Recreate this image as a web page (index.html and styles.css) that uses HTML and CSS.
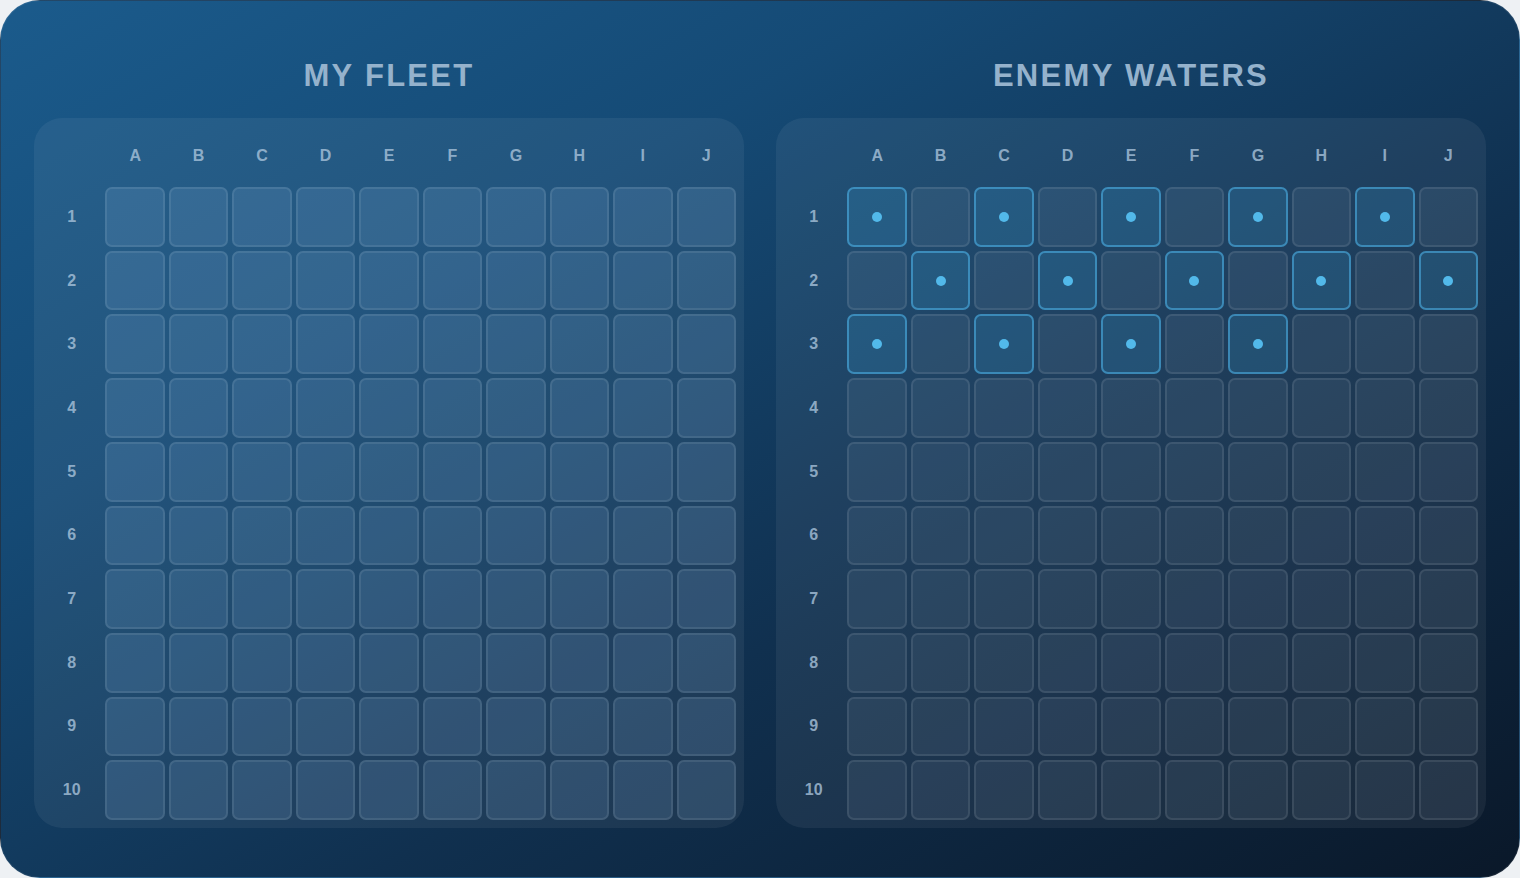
FILE: index.html
```html
<!DOCTYPE html>
<html lang="en">
<head>
<meta charset="utf-8">
<title>Battleship</title>
<link rel="stylesheet" href="styles.css">
</head>
<body>
<main class="board">
  <section class="side">
    <h2 class="side-title">MY FLEET</h2>
    <div class="grid fleet">
      <span class="corner"></span>
      <span class="col">A</span><span class="col">B</span><span class="col">C</span><span class="col">D</span><span class="col">E</span><span class="col">F</span><span class="col">G</span><span class="col">H</span><span class="col">I</span><span class="col">J</span>
      <span class="row">1</span><i class="cell"></i><i class="cell"></i><i class="cell"></i><i class="cell"></i><i class="cell"></i><i class="cell"></i><i class="cell"></i><i class="cell"></i><i class="cell"></i><i class="cell"></i>
      <span class="row">2</span><i class="cell"></i><i class="cell"></i><i class="cell"></i><i class="cell"></i><i class="cell"></i><i class="cell"></i><i class="cell"></i><i class="cell"></i><i class="cell"></i><i class="cell"></i>
      <span class="row">3</span><i class="cell"></i><i class="cell"></i><i class="cell"></i><i class="cell"></i><i class="cell"></i><i class="cell"></i><i class="cell"></i><i class="cell"></i><i class="cell"></i><i class="cell"></i>
      <span class="row">4</span><i class="cell"></i><i class="cell"></i><i class="cell"></i><i class="cell"></i><i class="cell"></i><i class="cell"></i><i class="cell"></i><i class="cell"></i><i class="cell"></i><i class="cell"></i>
      <span class="row">5</span><i class="cell"></i><i class="cell"></i><i class="cell"></i><i class="cell"></i><i class="cell"></i><i class="cell"></i><i class="cell"></i><i class="cell"></i><i class="cell"></i><i class="cell"></i>
      <span class="row">6</span><i class="cell"></i><i class="cell"></i><i class="cell"></i><i class="cell"></i><i class="cell"></i><i class="cell"></i><i class="cell"></i><i class="cell"></i><i class="cell"></i><i class="cell"></i>
      <span class="row">7</span><i class="cell"></i><i class="cell"></i><i class="cell"></i><i class="cell"></i><i class="cell"></i><i class="cell"></i><i class="cell"></i><i class="cell"></i><i class="cell"></i><i class="cell"></i>
      <span class="row">8</span><i class="cell"></i><i class="cell"></i><i class="cell"></i><i class="cell"></i><i class="cell"></i><i class="cell"></i><i class="cell"></i><i class="cell"></i><i class="cell"></i><i class="cell"></i>
      <span class="row">9</span><i class="cell"></i><i class="cell"></i><i class="cell"></i><i class="cell"></i><i class="cell"></i><i class="cell"></i><i class="cell"></i><i class="cell"></i><i class="cell"></i><i class="cell"></i>
      <span class="row">10</span><i class="cell"></i><i class="cell"></i><i class="cell"></i><i class="cell"></i><i class="cell"></i><i class="cell"></i><i class="cell"></i><i class="cell"></i><i class="cell"></i><i class="cell"></i>
    </div>
  </section>
  <section class="side">
    <h2 class="side-title">ENEMY WATERS</h2>
    <div class="grid enemy">
      <span class="corner"></span>
      <span class="col">A</span><span class="col">B</span><span class="col">C</span><span class="col">D</span><span class="col">E</span><span class="col">F</span><span class="col">G</span><span class="col">H</span><span class="col">I</span><span class="col">J</span>
      <span class="row">1</span><i class="cell shot"></i><i class="cell"></i><i class="cell shot"></i><i class="cell"></i><i class="cell shot"></i><i class="cell"></i><i class="cell shot"></i><i class="cell"></i><i class="cell shot"></i><i class="cell"></i>
      <span class="row">2</span><i class="cell"></i><i class="cell shot"></i><i class="cell"></i><i class="cell shot"></i><i class="cell"></i><i class="cell shot"></i><i class="cell"></i><i class="cell shot"></i><i class="cell"></i><i class="cell shot"></i>
      <span class="row">3</span><i class="cell shot"></i><i class="cell"></i><i class="cell shot"></i><i class="cell"></i><i class="cell shot"></i><i class="cell"></i><i class="cell shot"></i><i class="cell"></i><i class="cell"></i><i class="cell"></i>
      <span class="row">4</span><i class="cell"></i><i class="cell"></i><i class="cell"></i><i class="cell"></i><i class="cell"></i><i class="cell"></i><i class="cell"></i><i class="cell"></i><i class="cell"></i><i class="cell"></i>
      <span class="row">5</span><i class="cell"></i><i class="cell"></i><i class="cell"></i><i class="cell"></i><i class="cell"></i><i class="cell"></i><i class="cell"></i><i class="cell"></i><i class="cell"></i><i class="cell"></i>
      <span class="row">6</span><i class="cell"></i><i class="cell"></i><i class="cell"></i><i class="cell"></i><i class="cell"></i><i class="cell"></i><i class="cell"></i><i class="cell"></i><i class="cell"></i><i class="cell"></i>
      <span class="row">7</span><i class="cell"></i><i class="cell"></i><i class="cell"></i><i class="cell"></i><i class="cell"></i><i class="cell"></i><i class="cell"></i><i class="cell"></i><i class="cell"></i><i class="cell"></i>
      <span class="row">8</span><i class="cell"></i><i class="cell"></i><i class="cell"></i><i class="cell"></i><i class="cell"></i><i class="cell"></i><i class="cell"></i><i class="cell"></i><i class="cell"></i><i class="cell"></i>
      <span class="row">9</span><i class="cell"></i><i class="cell"></i><i class="cell"></i><i class="cell"></i><i class="cell"></i><i class="cell"></i><i class="cell"></i><i class="cell"></i><i class="cell"></i><i class="cell"></i>
      <span class="row">10</span><i class="cell"></i><i class="cell"></i><i class="cell"></i><i class="cell"></i><i class="cell"></i><i class="cell"></i><i class="cell"></i><i class="cell"></i><i class="cell"></i><i class="cell"></i>
    </div>
  </section>
</main>
</body>
</html>
```
FILE: styles.css
```css
html, body {
  margin: 0;
  padding: 0;
  background: #eef1f4;
}

body {
  font-family: "Liberation Sans", Arial, sans-serif;
}

.board {
  box-sizing: border-box;
  width: 1520px;
  height: 878px;
  border-radius: 40px;
  border: 1px solid rgba(255, 255, 255, 0.08);
  background: linear-gradient(150deg, #1b5b8c 0%, #154a75 30%, #10304f 62%, #0a1829 100%);
  display: grid;
  grid-template-columns: 1fr 1fr;
  column-gap: 32px;
  padding: 57px 33px 0 33px;
}

.side {
  display: flex;
  flex-direction: column;
  align-items: stretch;
}

.side-title {
  margin: 0 0 24px;
  text-align: center;
  font-size: 31px;
  line-height: 36px;
  font-weight: 700;
  letter-spacing: 2.3px;
  color: #95b2cc;
}

.grid {
  display: grid;
  grid-template-columns: repeat(11, 1fr);
  grid-template-rows: 57px repeat(10, 1fr);
  gap: 4px;
  padding: 8px;
  height: 694px;
  border-radius: 28px;
  background: rgba(255, 255, 255, 0.06);
}

.col, .row {
  display: flex;
  align-items: center;
  justify-content: center;
  font-size: 16px;
  font-weight: 700;
  color: rgba(170, 196, 220, 0.8);
}

.col {
  padding-top: 2px;
}

.cell {
  position: relative;
  display: block;
  box-sizing: border-box;
  border-radius: 7px;
  border: 2px solid rgba(255, 255, 255, 0.09);
}

.fleet .cell {
  background: rgba(140, 185, 230, 0.16);
}

.enemy .cell {
  background: rgba(160, 175, 195, 0.1);
}

.enemy .cell.shot {
  background: rgba(60, 170, 230, 0.18);
  border-color: rgba(80, 180, 235, 0.55);
}

.enemy .cell.shot::after {
  content: "";
  position: absolute;
  left: 50%;
  top: 50%;
  width: 10px;
  height: 10px;
  margin: -5px 0 0 -5px;
  border-radius: 50%;
  background: #52b9ea;
}
```
